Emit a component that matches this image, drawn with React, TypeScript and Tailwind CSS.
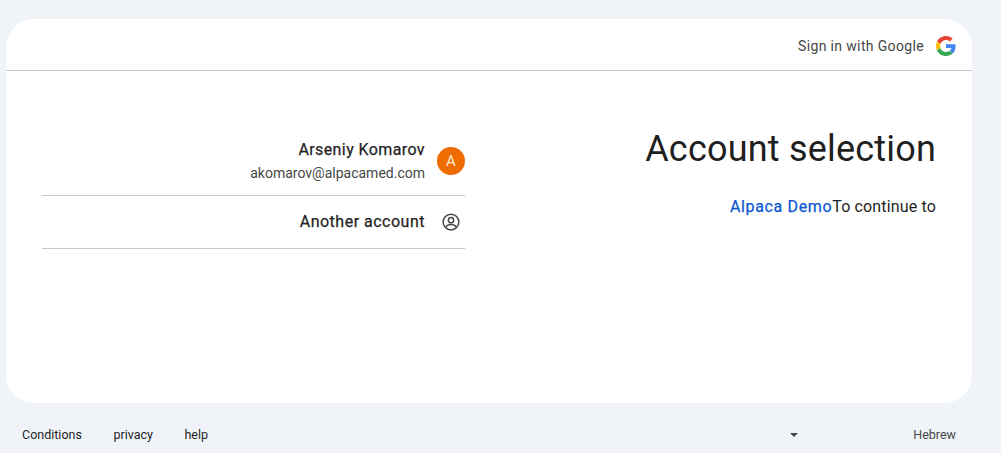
export default function App() {
  const font = { fontFamily: 'Roboto, "Liberation Sans", sans-serif' };
  return (
    <div style={font} className="w-[1001px] h-[453px] overflow-hidden bg-[#f0f4f9] flex flex-col pt-[19px]">
      <div className="ml-[6px] w-[966px] h-[384px] shrink-0 bg-white rounded-[28px] flex flex-col">
        <header className="h-[52px] shrink-0 border-b border-[#c4c7c5] flex items-center justify-end gap-3 pr-4 pt-[2px]">
          <span className="text-[14px] tracking-[0.35px] mt-[2px] text-[#444746]">Sign in with Google</span>
          <svg width="20" height="20" viewBox="0 0 48 48">
            <path fill="#EA4335" d="M24 9.5c3.54 0 6.71 1.22 9.21 3.6l6.85-6.85C35.9 2.38 30.47 0 24 0 14.62 0 6.51 5.38 2.56 13.22l7.98 6.19C12.43 13.72 17.74 9.5 24 9.5z" />
            <path fill="#4285F4" d="M46.98 24.55c0-1.57-.15-3.09-.38-4.55H24v9.02h12.94c-.58 2.96-2.26 5.48-4.78 7.18l7.73 6c4.51-4.18 7.09-10.36 7.09-17.65z" />
            <path fill="#FBBC05" d="M10.53 28.59c-.48-1.45-.76-2.99-.76-4.59s.27-3.14.76-4.59l-7.98-6.19C.92 16.46 0 20.12 0 24c0 3.88.92 7.54 2.56 10.78l7.97-6.19z" />
            <path fill="#34A853" d="M24 48c6.48 0 11.93-2.13 15.89-5.81l-7.73-6c-2.15 1.45-4.92 2.3-8.16 2.3-6.26 0-11.57-4.22-13.47-9.91l-7.98 6.19C6.51 42.62 14.62 48 24 48z" />
          </svg>
        </header>
        <main className="flex-1 flex justify-between pl-9 pr-9 pt-[56px]">
          <div className="w-[423px] pt-[12px]">
            <div className="h-[57px] border-b border-[#c4c7c5] flex items-start justify-end gap-3 pt-[1px]">
              <div className="text-right">
                <div className="text-[16px] leading-[20px] tracking-[0.4px] [-webkit-text-stroke:0.25px_#1f1f1f] text-[#1f1f1f]">Arseniy Komarov</div>
                <div className="text-[14px] leading-[20px] mt-[3px] text-[#444746]">akomarov@alpacamed.com</div>
              </div>
              <div className="w-7 h-7 mt-[7px] rounded-full bg-[#ef6c00] text-[#ffe9d6] text-[15px] flex items-center justify-center">A</div>
            </div>
            <div className="h-[53px] border-b border-[#c4c7c5] flex items-center justify-end pr-[5px] gap-[17px]">
              <span className="text-[16px] tracking-[0.5px] [-webkit-text-stroke:0.25px_#1f1f1f] text-[#1f1f1f]">Another account</span>
              <svg width="18" height="18" viewBox="0 0 24 24" fill="none" stroke="#444746" strokeWidth="2">
                <circle cx="12" cy="12" r="10.5" />
                <circle cx="12" cy="9.5" r="3.5" />
                <path d="M5 18.5c1.6-2.3 4.2-3.3 7-3.3s5.4 1 7 3.3" />
              </svg>
            </div>
          </div>
          <div className="text-right">
            <h1 className="text-[36px] leading-[44px] text-[#1f1f1f] font-normal tracking-[0.2px]">Account selection</h1>
            <p className="mt-[24px] text-[16px] leading-[24px] tracking-[0.15px] text-[#1f1f1f]">
              <span className="tracking-[0.65px] [-webkit-text-stroke:0.25px_#0b57d0] text-[#0b57d0]">Alpaca Demo</span>To continue to
            </p>
          </div>
        </main>
      </div>
      <footer className="flex-1 ml-[22px] mr-[45px] flex items-center justify-between text-[12.5px] pt-[14px]">
        <div className="flex gap-[31.5px] text-[#1f1f1f]">
          <span>Conditions</span>
          <span>privacy</span>
          <span>help</span>
        </div>
        <div className="flex items-center gap-[115px] text-[#444746]">
          <span className="w-0 h-0 border-x-[4px] border-x-transparent border-t-[4px] border-t-[#444746]" />
          <span>Hebrew</span>
        </div>
      </footer>
    </div>
  );
}
